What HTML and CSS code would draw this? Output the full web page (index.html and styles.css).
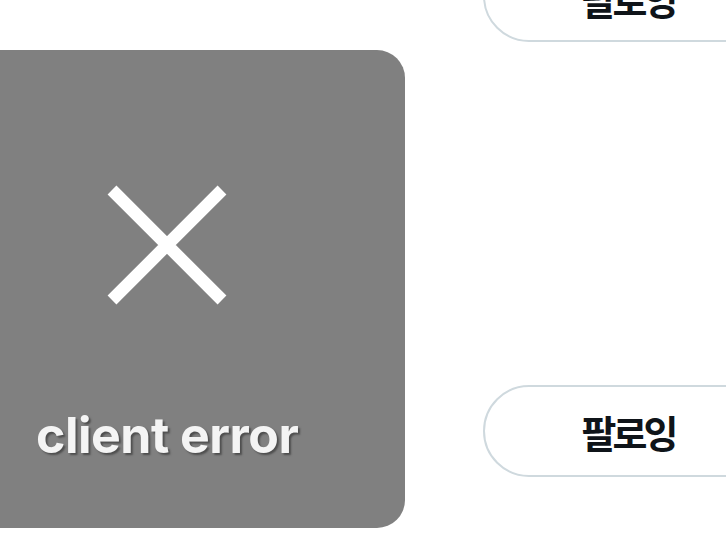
FILE: index.html
```html
<!DOCTYPE html>
<html lang="ko">
<head>
<meta charset="utf-8">
<title>client error</title>
<link rel="stylesheet" href="styles.css">
</head>
<body>
<div class="page">
  <div class="media-col">
    <div class="error-card">
      <svg class="error-icon" width="120" height="120" viewBox="0 0 120 120" aria-hidden="true">
        <path d="M5 5 L115 115 M115 5 L5 115" stroke="#ffffff" stroke-width="12.5" fill="none" stroke-linecap="butt"/>
      </svg>
      <div class="error-text">client error</div>
    </div>
  </div>
  <div class="action-col">
    <button class="follow-btn follow-btn--top">팔로잉</button>
    <button class="follow-btn">팔로잉</button>
  </div>
</div>
</body>
</html>
```

FILE: styles.css
```css
html, body {
  margin: 0;
  padding: 0;
  background: #ffffff;
  overflow: hidden;
  width: 726px;
  height: 544px;
}

.page {
  display: grid;
  grid-template-columns: 405px 294px;
  column-gap: 78px;
  align-items: start;
}

.media-col {
  padding-top: 50px;
}

.error-card {
  height: 478px;
  background: #808080;
  border-radius: 0 28px 28px 0;
  display: flex;
  flex-direction: column;
  padding-left: 36px;
  box-sizing: border-box;
}

.error-icon {
  display: block;
  margin-top: 135px;
  margin-left: 71px;
}

.error-text {
  margin-top: 105px;
  font-family: "Inter", "Liberation Sans", sans-serif;
  font-weight: 700;
  font-size: 50px;
  line-height: 1;
  letter-spacing: -0.5px;
  color: #f4f4f4;
  text-shadow: 2px 2px 2px rgba(60, 60, 60, 0.75);
}

.action-col {
  display: flex;
  flex-direction: column;
  gap: 343px;
  margin-top: -50px;
}

.follow-btn {
  height: 92px;
  width: 294px;
  box-sizing: border-box;
  border: 2px solid #cfd9de;
  border-radius: 46px;
  background: #ffffff;
  color: #0f1419;
  font-family: "Noto Sans CJK KR", "Noto Sans", sans-serif;
  font-weight: 700;
  font-size: 38px;
  letter-spacing: -4px;
  padding: 0 4px 0 0;
  display: flex;
  align-items: center;
  justify-content: center;
}

.follow-btn--top {
  padding-top: 4px;
}
```
